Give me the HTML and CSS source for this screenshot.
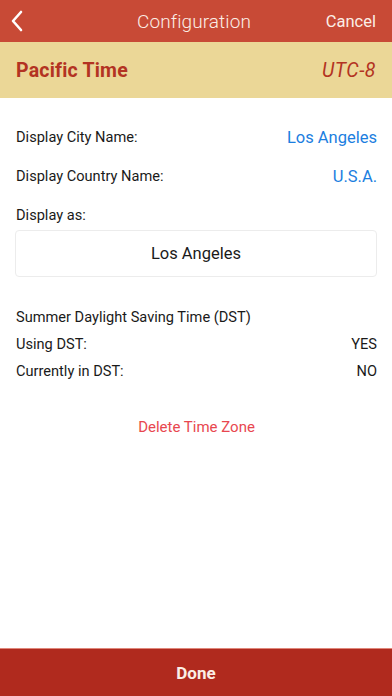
FILE: index.html
```html
<!DOCTYPE html>
<html>
<head>
<meta charset="utf-8">
<link rel="stylesheet" href="styles.css">
</head>
<body>
<div class="app">
  <header class="nav">
    <span class="back"><svg width="14" height="22" viewBox="0 0 14 22"><path d="M11 2 L3 11 L11 20" fill="none" stroke="#fff" stroke-width="2.6" stroke-linecap="round" stroke-linejoin="round"/></svg></span>
    <span class="title">Configuration</span>
    <span class="cancel">Cancel</span>
  </header>
  <div class="zone">
    <span class="zone-name">Pacific Time</span>
    <span class="zone-utc">UTC-8</span>
  </div>
  <main class="content">
    <div class="row r-city"><span>Display City Name:</span><span class="link">Los Angeles</span></div>
    <div class="row r-country"><span>Display Country Name:</span><span class="link">U.S.A.</span></div>
    <div class="row r-as"><span>Display as:</span></div>
    <div class="field">Los Angeles</div>
    <div class="row r-dst">Summer Daylight Saving Time (DST)</div>
    <div class="row r-tight"><span>Using DST:</span><span>YES</span></div>
    <div class="row r-tight"><span>Currently in DST:</span><span>NO</span></div>
    <div class="delete">Delete Time Zone</div>
  </main>
  <footer class="done">Done</footer>
</div>
</body>
</html>
```
FILE: styles.css
```css
* { box-sizing: border-box; }
html, body { margin: 0; padding: 0; }
body { font-family: "Roboto", "Liberation Sans", sans-serif; background: #fff; color: #1a1a1a; }
.app { width: 392px; height: 696px; display: flex; flex-direction: column; }
.nav { height: 42px; background: #c84a36; display: flex; align-items: center; justify-content: space-between; padding: 0 16px 0 10px; color: #fbeee6; }
.back { width: 60px; display: flex; align-items: center; }
.title { font-size: 19px; font-weight: 300; letter-spacing: 0.1px; margin-left: 14px; }
.cancel { font-size: 16.5px; width: 72px; text-align: right; }
.zone { height: 56px; background: #ebd797; display: flex; align-items: center; justify-content: space-between; padding: 0 16px; color: #b33322; font-size: 19.5px; }
.zone-name { font-weight: 700; letter-spacing: 0.2px; }
.zone-utc { font-style: italic; letter-spacing: 0.5px; }
.content { flex: 1; padding: 24px 15px 0 16px; font-size: 14.6px; }
.row { display: flex; justify-content: space-between; align-items: center; height: 20px; }
.r-city { margin-top: 5px; }
.r-country { margin-top: 19px; }
.r-as { margin-top: 19px; }
.link { color: #1b7ee0; font-size: 16.5px; }
.field { margin-top: 5px; height: 47px; border: 1px solid #ececec; border-radius: 4px; display: flex; align-items: center; justify-content: center; font-size: 16.5px; margin-left: -1px; }
.r-dst { margin-top: 30px; }
.r-tight { margin-top: 7px; }
.delete { margin-top: 37px; text-align: center; color: #e8474f; font-size: 15px; }
.done { height: 48px; background: #b02a1e; border-top: 1px solid #e0867a; display: flex; align-items: center; justify-content: center; color: #fbeee6; font-weight: 700; font-size: 17px; }
```
